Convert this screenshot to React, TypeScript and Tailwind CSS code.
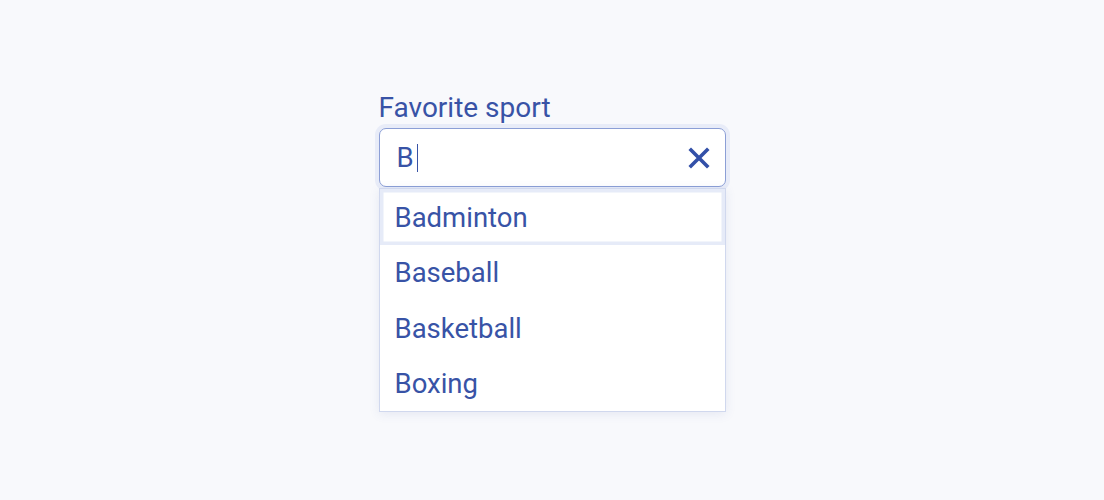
import { useState } from 'react'

const sports = ['Badminton', 'Baseball', 'Basketball', 'Boxing']

export default function App() {
  const [query, setQuery] = useState('B')
  const [active, setActive] = useState(0)

  return (
    <div
      className="min-h-screen w-full bg-[#f8f9fc] flex justify-center pt-[92px]"
      style={{ fontFamily: 'Roboto, "Noto Sans", sans-serif' }}
    >
      <div className="w-[347px] flex flex-col">
        {/* label */}
        <label className="text-[28px] leading-[32px] text-[#3853a6] mb-[4px]">Favorite sport</label>

        {/* combobox input */}
        <div className="h-[59px] flex items-center rounded-[7px] border-[1.5px] border-[#8c9fd6] bg-white pl-[17px] pr-[13px] shadow-[0_0_0_4px_#e8ecf8]">
          <div className="flex-1 flex items-center text-[27.5px] text-[#3853a6] leading-none">
            <span>{query}</span>
            <span className="ml-[3px] w-[1.5px] h-[28px] bg-[#3853a6]" />
          </div>
          <button
            onClick={() => setQuery('')}
            className="w-[26px] h-[26px] flex items-center justify-center"
            aria-label="Clear"
          >
            <svg width="22" height="22" viewBox="0 0 22 22" fill="none" stroke="#3350a8" strokeWidth="3.6" strokeLinecap="square">
              <path d="M3 3l16 16M19 3L3 19" />
            </svg>
          </button>
        </div>

        {/* options */}
        <ul className="mt-[1px] bg-white border-[1.5px] border-[#d0d8ee] shadow-[0_2px_10px_rgba(60,80,160,0.1)]">
          {sports.map((s, i) => (
            <li
              key={s}
              onMouseEnter={() => setActive(i)}
              className={`h-[55.5px] flex items-center pl-[15px] pt-[1px] text-[27.5px] text-[#3853a6] ${
                active === i ? 'shadow-[inset_0_0_0_3.5px_#e6ebf8]' : ''
              }`}
            >
              {s}
            </li>
          ))}
        </ul>
      </div>
    </div>
  )
}
